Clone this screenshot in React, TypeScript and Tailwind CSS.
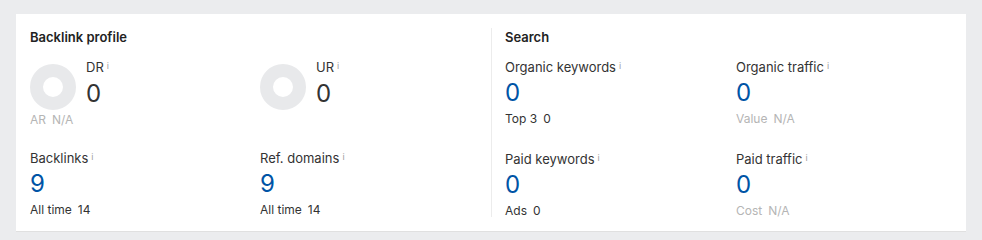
import React from "react";

const Info = () => (
  <sup className="ml-[3px] text-[9px] text-[#a0a0a0] relative -top-[3px]">i</sup>
);

const Donut = () => (
  <svg width="46" height="46" viewBox="0 0 46 46" className="shrink-0">
    <circle cx="23" cy="23" r="16.5" fill="none" stroke="#e8e9eb" strokeWidth="13" />
  </svg>
);

function Metric({
  label,
  value,
  subLabel,
  subValue,
  blue,
  muted,
}: {
  label: string;
  value: string;
  subLabel: string;
  subValue: string;
  blue?: boolean;
  muted?: boolean;
}) {
  return (
    <div className="flex flex-col">
      <div className="text-[13px] leading-[18px] text-[#333]">
        {label}
        <Info />
      </div>
      <div className={`text-[24px] leading-[32px] mt-[1px] ${blue ? "text-[#0054a6]" : "text-[#333]"}`}>{value}</div>
      <div className={`text-[12px] leading-[16px] mt-[2px] ${muted ? "text-[#b5b5b5]" : "text-[#333]"}`}>
        {subLabel}
        <span className="ml-[6px]">{subValue}</span>
      </div>
    </div>
  );
}

function Rated({ label, value }: { label: string; value: string }) {
  return (
    <div className="flex items-center gap-[10px] h-[52px]">
      <Donut />
      <div className="flex flex-col -mt-[8px]">
        <div className="text-[13px] leading-[18px] text-[#333]">
          {label}
          <Info />
        </div>
        <div className="text-[24px] leading-[30px] mt-[3px] text-[#333]">{value}</div>
      </div>
    </div>
  );
}

export default function App() {
  return (
    <div className="w-[982px] h-[240px] bg-[#ebecee] pl-[16px] pt-[14px] font-['Inter',sans-serif]">
      <div className="w-[950px] h-[218px] bg-white border-b border-[#e0e0e0] flex pt-[14px]">
        <div className="w-[475px] pl-[14px] flex flex-col">
          <div className="text-[13px] font-semibold leading-[18px] text-[#222]">Backlink profile</div>
          <div className="grid grid-cols-[230px_230px] mt-[15px]">
            <div>
              <Rated label="DR" value="0" />
              <div className="text-[12px] leading-[16px] text-[#b5b5b5] -mt-[1px]">
                AR<span className="ml-[6px]">N/A</span>
              </div>
            </div>
            <div>
              <Rated label="UR" value="0" />
            </div>
          </div>
          <div className="grid grid-cols-[230px_230px] mt-[21px]">
            <Metric label="Backlinks" value="9" subLabel="All time" subValue="14" blue />
            <Metric label="Ref. domains" value="9" subLabel="All time" subValue="14" blue />
          </div>
        </div>
        <div className="w-[461px] border-l border-[#ececec] pl-[13px] mb-[14px] flex flex-col">
          <div className="text-[13px] font-semibold leading-[18px] text-[#222]">Search</div>
          <div className="grid grid-cols-[231px_230px] mt-[12px]">
            <Metric label="Organic keywords" value="0" subLabel="Top 3" subValue="0" blue />
            <Metric label="Organic traffic" value="0" subLabel="Value" subValue="N/A" blue muted />
          </div>
          <div className="grid grid-cols-[231px_230px] mt-[23px]">
            <Metric label="Paid keywords" value="0" subLabel="Ads" subValue="0" blue />
            <Metric label="Paid traffic" value="0" subLabel="Cost" subValue="N/A" blue muted />
          </div>
        </div>
      </div>
    </div>
  );
}
